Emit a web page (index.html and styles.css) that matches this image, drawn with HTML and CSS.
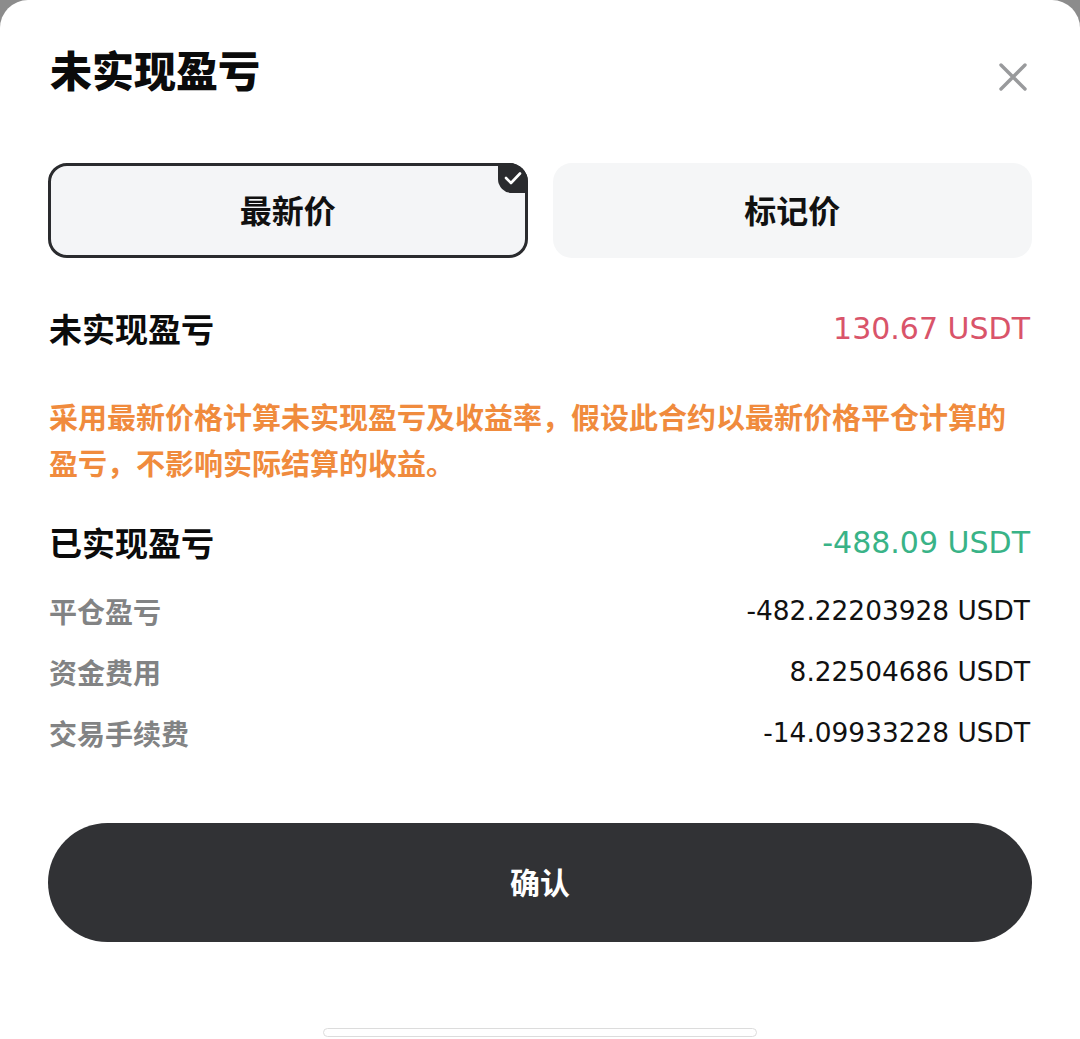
FILE: index.html
```html
<!DOCTYPE html>
<html lang="zh-CN">
<head>
<meta charset="utf-8">
<title>未实现盈亏</title>
<link rel="stylesheet" href="styles.css">
</head>
<body>
<div class="sheet">
  <div class="header">
    <h1 class="title">未实现盈亏</h1>
    <button class="close" aria-label="关闭">
      <svg width="28" height="28" viewBox="0 0 28 28"><path d="M2 2 L26 26 M26 2 L2 26" stroke="#999a9c" stroke-width="3.4" stroke-linecap="round" fill="none"/></svg>
    </button>
  </div>

  <div class="tabs">
    <div class="tab tab-active">最新价
      <span class="badge"><svg width="18" height="14" viewBox="0 0 18 14"><path d="M2 7 L7 12 L16 2.5" stroke="#fff" stroke-width="2.6" fill="none" stroke-linecap="round" stroke-linejoin="round"/></svg></span>
    </div>
    <div class="tab">标记价</div>
  </div>

  <div class="row row-main first">
    <span class="label-main">未实现盈亏</span>
    <span class="value-main red">130.67 USDT</span>
  </div>

  <p class="notice">采用最新价格计算未实现盈亏及收益率，假设此合约以最新价格平仓计算的盈亏，不影响实际结算的收益。</p>

  <div class="row row-main second">
    <span class="label-main">已实现盈亏</span>
    <span class="value-main green">-488.09 USDT</span>
  </div>

  <div class="details">
    <div class="row row-detail"><span class="label-detail">平仓盈亏</span><span class="value-detail">-482.22203928 USDT</span></div>
    <div class="row row-detail"><span class="label-detail">资金费用</span><span class="value-detail">8.22504686 USDT</span></div>
    <div class="row row-detail"><span class="label-detail">交易手续费</span><span class="value-detail">-14.09933228 USDT</span></div>
  </div>

  <button class="confirm">确认</button>

  <div class="home-bar"></div>
</div>
</body>
</html>
```

FILE: styles.css
```css
html {
  background: #8c8c8c;
}
body {
  margin: 0;
  font-family: "DejaVu Sans", "Noto Sans CJK SC", sans-serif;
  color: #111;
}
.sheet {
  background: #fff;
  border-radius: 28px 28px 0 0;
  height: 1039px;
  box-sizing: border-box;
  padding: 37px 48px 0;
  display: flex;
  flex-direction: column;
  overflow: hidden;
}
.header {
  display: flex;
  justify-content: space-between;
  align-items: center;
  height: 64px;
}
.title {
  margin: 0 0 0 2px;
  font-family: "Noto Sans CJK SC", sans-serif;
  font-size: 42px;
  font-weight: 900;
  line-height: 64px;
  color: #0b0b0b;
}
.close {
  border: 0;
  background: none;
  padding: 0;
  width: 28px;
  height: 28px;
  margin: 16px 5px 0 0;
  display: flex;
}
.tabs {
  margin-top: 62px;
  display: grid;
  grid-template-columns: 1fr 1fr;
  gap: 25px;
}
.tab {
  position: relative;
  height: 95px;
  box-sizing: border-box;
  border-radius: 19px;
  background: #f5f6f7;
  display: flex;
  align-items: center;
  justify-content: center;
  font-family: "Noto Sans CJK SC", sans-serif;
  font-size: 32px;
  font-weight: 700;
  color: #111;
  padding-bottom: 3px;
}
.tab-active {
  border: 3px solid #2a2b2e;
  background: #f4f5f7;
}
.badge {
  position: absolute;
  top: -3px;
  right: -3px;
  width: 30px;
  height: 30px;
  background: #2a2b2e;
  border-radius: 0 19px 0 14px;
  display: flex;
  align-items: center;
  justify-content: center;
  padding-left: 1px;
  box-sizing: border-box;
}
.row {
  display: flex;
  justify-content: space-between;
  align-items: center;
}
.row-main {
  height: 50px;
}
.row-main.first {
  margin-top: 45px;
}
.row-main.second {
  margin-top: 32px;
}
.label-main {
  font-family: "Noto Sans CJK SC", sans-serif;
  font-size: 33px;
  font-weight: 700;
  color: #0b0b0b;
  padding-left: 1px;
}
.value-main {
  font-size: 30px;
  padding-right: 2px;
}
.red {
  color: #d9546a;
}
.green {
  color: #39b387;
}
.notice {
  margin: 40px 0 0;
  font-family: "Noto Sans CJK SC", sans-serif;
  font-size: 29px;
  font-weight: 700;
  line-height: 46px;
  color: #f08b3d;
  padding-left: 1px;
}
.details {
  margin-top: 13px;
  display: flex;
  flex-direction: column;
}
.row-detail {
  height: 61px;
}
.label-detail {
  font-family: "Noto Sans CJK SC", sans-serif;
  font-size: 28px;
  font-weight: 700;
  color: #828384;
  padding-left: 1px;
}
.value-detail {
  font-size: 26.4px;
  color: #111;
  padding-right: 2px;
}
.confirm {
  margin-top: 60px;
  height: 119px;
  border: 0;
  border-radius: 60px;
  background: #313235;
  color: #fff;
  font-family: "Noto Sans CJK SC", sans-serif;
  font-size: 30px;
  font-weight: 700;
  width: 100%;
  padding-bottom: 4px;
}
.home-bar {
  margin: 86px auto 0;
  width: 434px;
  height: 9px;
  box-sizing: border-box;
  border: 1.5px solid #dcdcdc;
  border-radius: 5px;
  background: #fff;
}
```
